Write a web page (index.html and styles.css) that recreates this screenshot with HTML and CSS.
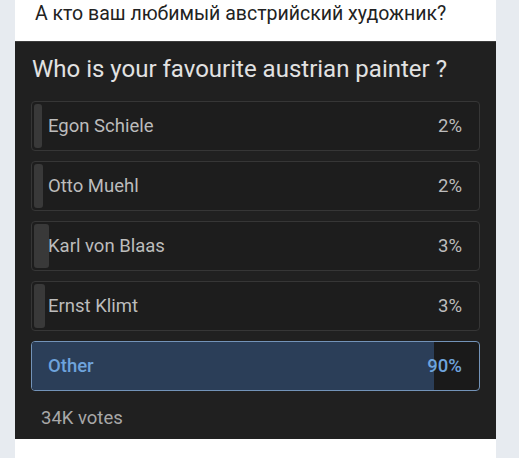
FILE: index.html
```html
<!DOCTYPE html>
<html lang="ru">
  <head>
    <meta charset="UTF-8" />
    <meta name="viewport" content="width=device-width, initial-scale=1.0" />
    <title>Опрос</title>
    <link rel="stylesheet" href="styles.css">
  </head>
  <body>
    <div class="card">
      <p class="question">А кто ваш любимый австрийский художник?</p>
      <div class="poll">
        <h2 class="poll-title">Who is your favourite austrian painter ?</h2>
        <div class="options">
          <div class="option">
            <div class="fill" style="width: 8px"></div>
            <span class="name">Egon Schiele</span>
            <span class="pct">2%</span>
          </div>
          <div class="option">
            <div class="fill" style="width: 9px"></div>
            <span class="name">Otto Muehl</span>
            <span class="pct">2%</span>
          </div>
          <div class="option">
            <div class="fill" style="width: 15px"></div>
            <span class="name">Karl von Blaas</span>
            <span class="pct">3%</span>
          </div>
          <div class="option">
            <div class="fill" style="width: 11px"></div>
            <span class="name">Ernst Klimt</span>
            <span class="pct">3%</span>
          </div>
          <div class="option chosen">
            <div class="fill" style="width: 90%"></div>
            <span class="name">Other</span>
            <span class="pct">90%</span>
          </div>
        </div>
        <p class="votes">34K votes</p>
      </div>
    </div>
  </body>
</html>
```

FILE: styles.css
```css
body {
  margin: 0;
  background: #e7ebf0;
  font-family: Roboto, "Liberation Sans", sans-serif;
}

.card {
  margin: 0 23px 0 15px;
  height: 458px;
  background: #fff;
}

.question {
  margin: 0;
  height: 41px;
  padding: 0 0 0 20px;
  font-size: 19.5px;
  line-height: 28px;
  color: #222;
}

/* Опрос */
.poll {
  background: #202020;
  border-top: 1px solid #3c3c3c;
  padding: 9px 16px 10px 16px;
}
.poll-title {
  margin: 0 0 14px 1px;
  font-size: 24px;
  font-weight: 400;
  line-height: 36px;
  color: #e2e2e2;
}
.options {
  display: flex;
  flex-direction: column;
  gap: 10px;
}
.option {
  position: relative;
  height: 50px;
  box-sizing: border-box;
  display: flex;
  align-items: center;
  justify-content: space-between;
  padding: 0 17px 0 16px;
  border: 1px solid #363636;
  border-radius: 4px;
  background: #1d1d1d;
  font-size: 18.5px;
  color: #bcbcbc;
}
.option .fill {
  position: absolute;
  left: 2px;
  top: 2px;
  bottom: 2px;
  background: #393939;
  border-radius: 3px;
}
.option span {
  position: relative;
}
.option.chosen {
  border-color: #7393b8;
  background: #1a1a1a;
}
.option.chosen .fill {
  left: 0;
  top: 0;
  bottom: 0;
  background: #2b3e58;
  border-radius: 3px 0 0 3px;
}
.option.chosen span {
  color: #6ea3dc;
  font-weight: 500;
}
.votes {
  margin: 16px 0 0 10px;
  font-size: 18.5px;
  line-height: 22px;
  color: #a8a8a8;
}
```
